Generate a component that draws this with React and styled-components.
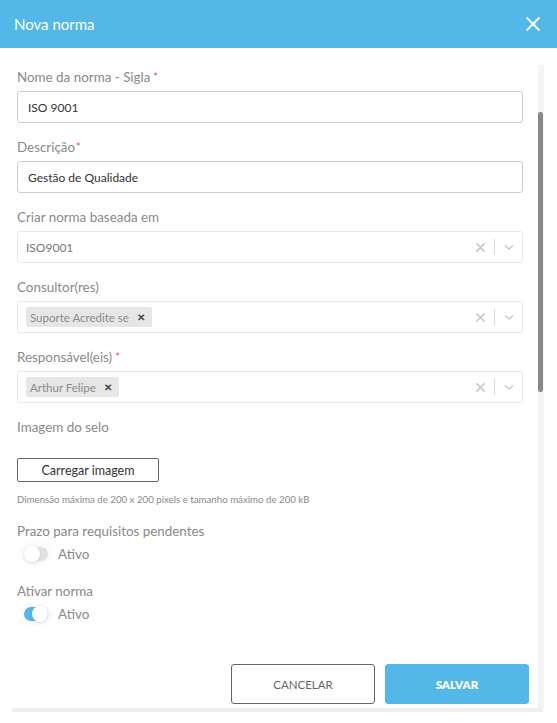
import React from "react";
import styled, { createGlobalStyle } from "styled-components";

const Global = createGlobalStyle`
  html, body { margin: 0; padding: 0; background: #fff; }
  body { font-family: Lato, "Open Sans", sans-serif; }
  * { box-sizing: border-box; }
`;

const BLUE = "#53b7e7";

const Modal = styled.div`
  width: 557px;
  height: 723px;
  background: #fff;
  display: flex;
  flex-direction: column;
`;

const Header = styled.header`
  height: 48px;
  background: ${BLUE};
  display: flex;
  align-items: center;
  justify-content: space-between;
  padding: 0 16px 0 14px;
  color: #fff;
`;

const Title = styled.h1`
  margin: 0;
  font-size: 15px;
  font-weight: 400;
`;

const CloseBtn = styled.button`
  border: 0;
  background: transparent;
  padding: 0;
  width: 16px;
  height: 16px;
  display: flex;
  cursor: pointer;
`;

const Body = styled.div`
  flex: 1;
  display: flex;
  flex-direction: column;
  padding: 17px 13px 11px 12px;
`;

const ScrollRow = styled.div`
  flex: 1;
  display: flex;
`;

const Content = styled.div`
  flex: 1;
  padding: 2px 9px 0 5px;
  display: flex;
  flex-direction: column;
`;

const Track = styled.div`
  width: 6px;
  background: #f4f4f4;
  padding-top: 47px;
`;

const Thumb = styled.div`
  width: 5px;
  height: 280px;
  background: #888;
  border-radius: 2px;
`;

const HBar = styled.div`
  height: 4px;
  background: #efefef;
  margin-right: 1px;
`;

const Field = styled.div`
  display: flex;
  flex-direction: column;
  margin-right: 6px;
  margin-bottom: ${(p) => p.$mb ?? 14}px;
`;

const Label = styled.label`
  font-size: 13.4px;
  line-height: 20px;
  color: #8a8a8a;
  font-weight: 400;
  margin-bottom: ${(p) => p.$mb ?? 4}px;
`;

const Req = styled.span`
  color: #e45050;
  font-size: 11px;
  vertical-align: top;
  margin-left: ${(p) => p.$ml ?? 3}px;
`;

const Input = styled.input`
  height: 32px;
  border: 1px solid #cfcfcf;
  border-radius: 3px;
  padding: 0 10px;
  font-family: inherit;
  font-size: 12px;
  color: #333;
  outline: none;
`;

const Select = styled.div`
  height: 32px;
  border: 1px solid #e8e8e8;
  border-radius: 3px;
  display: flex;
  align-items: center;
  padding: 0 6px 0 7px;
`;

const Value = styled.div`
  flex: 1;
  display: flex;
  align-items: center;
  font-size: 12px;
  color: #777;
  padding-left: 1px;
`;

const Chip = styled.span`
  display: inline-flex;
  align-items: center;
  height: 20px;
  background: #e6e6e6;
  border-radius: 2px;
  padding: 0 7px 0 4px;
  font-size: 11.5px;
  color: #8a8a8a;
  gap: 8px;
`;

const ChipX = styled.span`
  font-size: 10px;
  font-weight: 700;
  color: #444;
`;

const Indicators = styled.div`
  display: flex;
  align-items: center;
  height: 100%;
`;

const Sep = styled.span`
  width: 1px;
  height: 16px;
  background: #d9d9d9;
  margin: 0 7px 0 9px;
`;

const UploadBtn = styled.button`
  align-self: flex-start;
  width: 142px;
  height: 24px;
  border: 1px solid #666;
  border-radius: 2px;
  background: #fff;
  font-family: inherit;
  font-size: 12.5px;
  color: #333;
  padding: 0;
  margin-bottom: 10px;
`;

const Help = styled.p`
  margin: 0 0 15px;
  font-size: 9.7px;
  line-height: 14px;
  color: #8a8a8a;
`;

const ToggleRow = styled.div`
  display: flex;
  align-items: center;
  gap: 10px;
  padding-left: 7px;
  height: 22px;
  font-size: 13.4px;
  color: #8a8a8a;
`;

const Switch = styled.span`
  width: 24px;
  height: 14px;
  border-radius: 8px;
  background: ${(p) => (p.$on ? BLUE : "#e2e2e2")};
  display: flex;
  align-items: center;
  justify-content: ${(p) => (p.$on ? "flex-end" : "flex-start")};
  box-shadow: 0 0 10px rgba(0, 0, 0, 0.08);
`;

const Knob = styled.span`
  width: 16px;
  height: 16px;
  border-radius: 50%;
  background: #fff;
  box-shadow: 0 1px 3px rgba(0, 0, 0, 0.12);
`;

const Footer = styled.div`
  margin-top: auto;
  display: flex;
  justify-content: flex-end;
  gap: 10px;
  padding-bottom: 4px;
`;

const Btn = styled.button`
  width: 144px;
  height: 40px;
  border-radius: 3px;
  font-family: inherit;
  font-size: 11.5px;
  text-transform: uppercase;
  padding: 0;
  border: 1px solid ${(p) => (p.$primary ? BLUE : "#666")};
  background: ${(p) => (p.$primary ? BLUE : "#fff")};
  color: ${(p) => (p.$primary ? "#fff" : "#666")};
  font-weight: ${(p) => (p.$primary ? 800 : 400)};
`;

const XIcon = ({ size = 10, color = "#bbb", width = 1.6 }) => (
  <svg width={size} height={size} viewBox="0 0 10 10">
    <path d="M1 1L9 9M9 1L1 9" stroke={color} strokeWidth={width} strokeLinecap="round" />
  </svg>
);

const Chevron = () => (
  <svg width="14" height="14" viewBox="0 0 14 14">
    <path d="M3 5.5L7 9L11 5.5" stroke="#c4c4c4" strokeWidth="1.2" fill="none" />
  </svg>
);

const SelectBox = ({ children }) => (
  <Select>
    <Value>{children}</Value>
    <Indicators>
      <XIcon size={9} color="#c8c8c8" width={1.7} />
      <Sep />
      <Chevron />
    </Indicators>
  </Select>
);

export default function App() {
  return (
    <>
      <Global />
      <Modal>
        <Header>
          <Title>Nova norma</Title>
          <CloseBtn aria-label="Fechar">
            <svg width="16" height="16" viewBox="0 0 16 16">
              <path d="M1.5 1.5L14.5 14.5M14.5 1.5L1.5 14.5" stroke="#fff" strokeWidth="1.8" />
            </svg>
          </CloseBtn>
        </Header>
        <Body>
          <ScrollRow>
            <Content>
              <Field>
                <Label>
                  Nome da norma - Sigla<Req>*</Req>
                </Label>
                <Input defaultValue="ISO 9001" />
              </Field>
              <Field>
                <Label>
                  Descrição<Req $ml={1}>*</Req>
                </Label>
                <Input defaultValue="Gestão de Qualidade" />
              </Field>
              <Field>
                <Label>Criar norma baseada em</Label>
                <SelectBox>ISO9001</SelectBox>
              </Field>
              <Field>
                <Label>Consultor(res)</Label>
                <SelectBox>
                  <Chip>
                    Suporte Acredite se <ChipX>✕</ChipX>
                  </Chip>
                </SelectBox>
              </Field>
              <Field>
                <Label>
                  Responsável(eis)<Req>*</Req>
                </Label>
                <SelectBox>
                  <Chip>
                    Arthur Felipe <ChipX>✕</ChipX>
                  </Chip>
                </SelectBox>
              </Field>
              <Field $mb={0}>
                <Label $mb={21}>Imagem do selo</Label>
                <UploadBtn>Carregar imagem</UploadBtn>
                <Help>Dimensão máxima de 200 x 200 pixels e tamanho máximo de 200 kB</Help>
              </Field>
              <Field $mb={16}>
                <Label $mb={2}>Prazo para requisitos pendentes</Label>
                <ToggleRow>
                  <Switch>
                    <Knob />
                  </Switch>
                  Ativo
                </ToggleRow>
              </Field>
              <Field $mb={0}>
                <Label $mb={2}>Ativar norma</Label>
                <ToggleRow>
                  <Switch $on>
                    <Knob />
                  </Switch>
                  Ativo
                </ToggleRow>
              </Field>
              <Footer>
                <Btn>Cancelar</Btn>
                <Btn $primary>Salvar</Btn>
              </Footer>
            </Content>
            <Track>
              <Thumb />
            </Track>
          </ScrollRow>
          <HBar />
        </Body>
      </Modal>
    </>
  );
}
